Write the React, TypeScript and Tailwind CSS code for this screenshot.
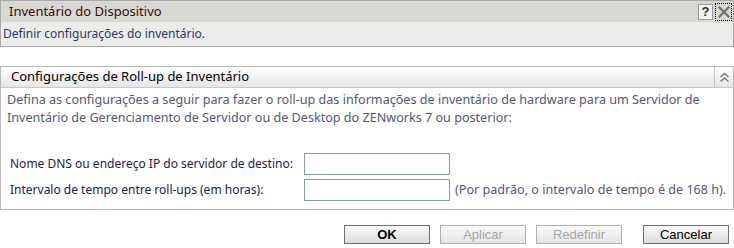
import React from 'react';

const HelpButton: React.FC = () => (
  <div className="w-[15px] h-[16px] border border-[#9a9a9a] bg-[#f4f4f2] flex items-center justify-center text-[13px] font-bold text-[#333] leading-none font-['Liberation_Sans',sans-serif]">
    ?
  </div>
);

const CloseButton: React.FC = () => (
  <div className="w-[17px] h-[18px] border border-dotted border-black flex items-center justify-center">
    <svg width="12" height="12" viewBox="0 0 12 12">
      <path d="M1.5 1.5 L10.5 10.5 M10.5 1.5 L1.5 10.5" stroke="#6e6e6e" strokeWidth="2" strokeLinecap="square" />
    </svg>
  </div>
);

const CollapseIcon: React.FC = () => (
  <svg width="11" height="11" viewBox="0 0 11 11">
    <path d="M1.5 5 L5.5 1.5 L9.5 5 M1.5 9.5 L5.5 6 L9.5 9.5" fill="none" stroke="#777" strokeWidth="1.4" />
  </svg>
);

const Field: React.FC<{ label: string; note?: string }> = ({ label, note }) => (
  <div className="flex items-center">
    <span className="w-[294px] shrink-0 text-[#1c1c4c]">{label}</span>
    <input className="w-[146px] h-[22px] border border-[#7f9db9] bg-white outline-none" />
    {note && <span className="ml-[5px] text-[12.6px] text-[#55557a]">{note}</span>}
  </div>
);

const Button: React.FC<{ label: string; disabled?: boolean; bold?: boolean }> = ({ label, disabled, bold }) => (
  <button
    className={
      disabled
        ? 'w-[86px] h-[19px] border border-[#b0b0b0] bg-gradient-to-b from-[#fafafa] to-[#e4e4e4] text-[#a6a6a6] text-[13px] leading-none font-["Liberation_Sans",sans-serif]'
        : bold
        ? 'w-[86px] h-[19px] border border-[#707070] bg-gradient-to-b from-[#fafafa] to-[#dcdcdc] text-black font-bold text-[13px] leading-none font-["Liberation_Sans",sans-serif]'
        : 'w-[86px] h-[19px] border border-[#707070] bg-gradient-to-b from-[#fafafa] to-[#dcdcdc] text-black text-[13px] leading-none font-["Liberation_Sans",sans-serif]'
    }
  >
    {label}
  </button>
);

export default function App() {
  return (
    <div className="w-[734px] h-[248px] bg-white overflow-hidden font-['Noto_Sans',sans-serif] text-[12px]">
      {/* caixa superior */}
      <div className="border border-[#a9a9a9]">
        <div className="h-[21px] bg-[#d7d8d1] flex items-center justify-between pl-[8px] pr-px">
          <span className="text-[13px] text-[#3a0a0a]">Inventário do Dispositivo</span>
          <div className="flex items-center gap-[2px]">
            <HelpButton />
            <CloseButton />
          </div>
        </div>
        <div className="h-[24px] bg-[#ececea] flex items-center pl-[2px] text-[#1f3a6e]">
          Definir configurações do inventário.
        </div>
      </div>

      {/* painel de roll-up */}
      <div className="mt-[19px] border border-[#b9b9b9]">
        <div className="h-[21px] flex items-stretch border-b border-[#c8c8c8] bg-gradient-to-b from-white to-[#e6e6e6]">
          <span className="flex-1 flex items-center pl-[10px] text-[13px] text-black">
            Configurações de Roll-up de Inventário
          </span>
          <div className="w-[19px] border-l border-[#c8c8c8] flex items-center justify-center">
            <CollapseIcon />
          </div>
        </div>
        <div className="px-[6px] pt-[3px] pb-[8px]">
          <p className="leading-[18px] text-[12.6px] text-[#52577a]">
            Defina as configurações a seguir para fazer o roll-up das informações de inventário de hardware para um Servidor de
            Inventário de Gerenciamento de Servidor ou de Desktop do ZENworks 7 ou posterior:
          </p>
          <div className="mt-[26px] pl-[3px] flex flex-col gap-[4px]">
            <Field label="Nome DNS ou endereço IP do servidor de destino:" />
            <Field label="Intervalo de tempo entre roll-ups (em horas):" note="(Por padrão, o intervalo de tempo é de 168 h)." />
          </div>
        </div>
      </div>

      {/* botões */}
      <div className="mt-[15px] flex justify-end pr-[5px] gap-[10px]">
        <Button label="OK" bold />
        <Button label="Aplicar" disabled />
        <Button label="Redefinir" disabled />
        <div className="w-px" />
        <Button label="Cancelar" />
      </div>
    </div>
  );
}
